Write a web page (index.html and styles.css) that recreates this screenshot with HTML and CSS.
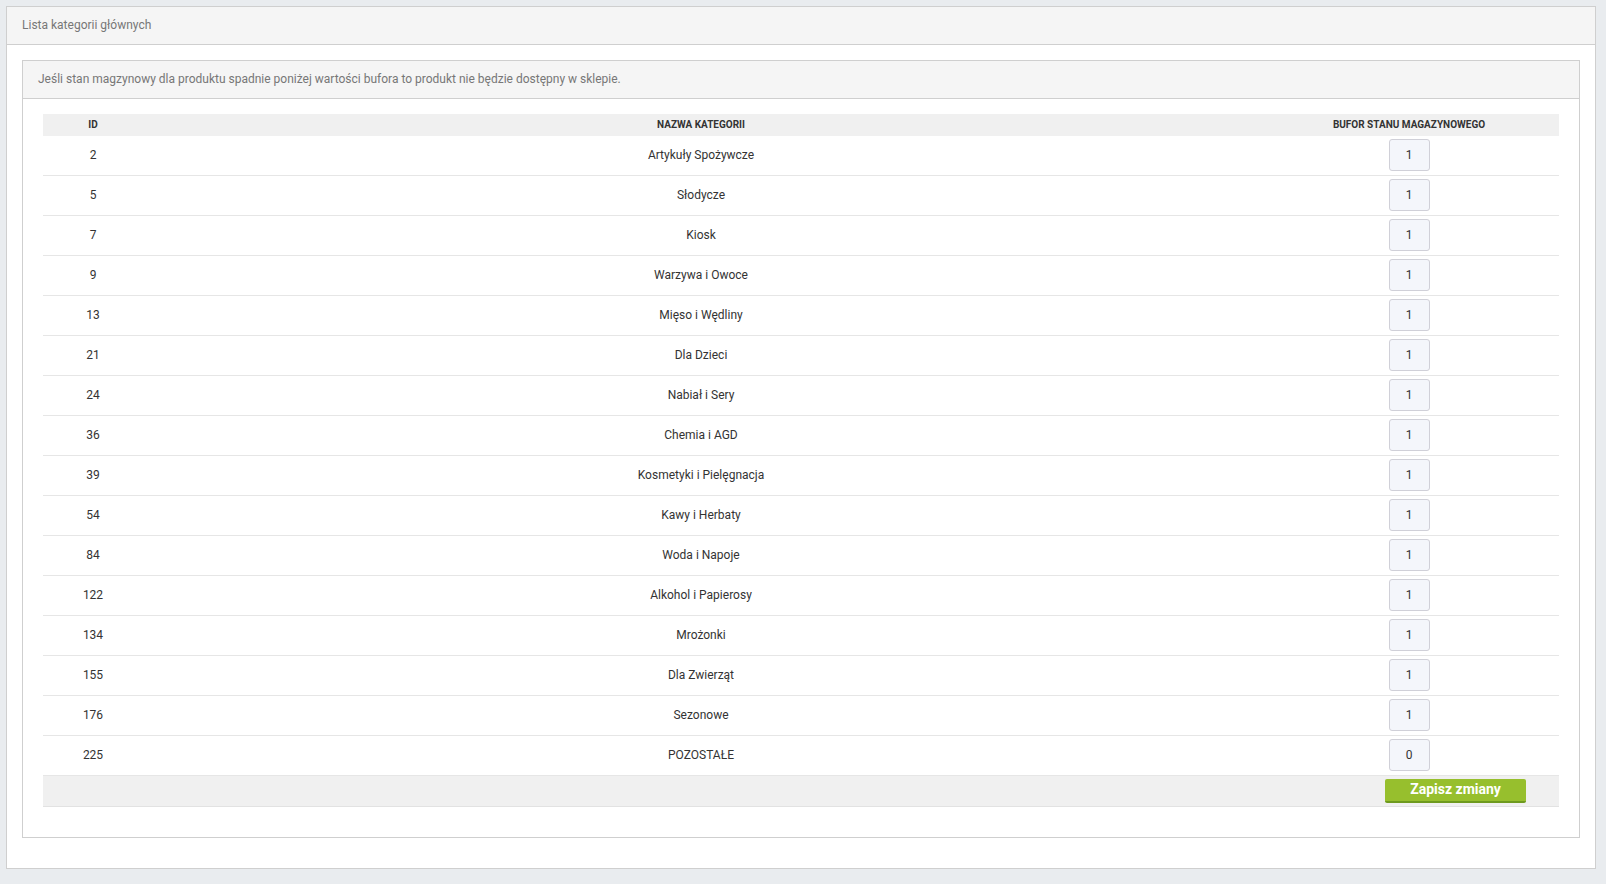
FILE: index.html
```html
<!DOCTYPE html>
<html lang="pl">

<head>
    <meta charset="UTF-8">
    <title>Lista kategorii głównych</title>
    <link rel="stylesheet" href="styles.css">
</head>

<body>

    <div class="panel">
        <div class="panel-head">Lista kategorii głównych</div>
        <div class="panel-body">
            <div class="box">
                <div class="box-head">Jeśli stan magzynowy dla produktu spadnie poniżej wartości bufora to produkt nie będzie dostępny w sklepie.</div>
                <div class="box-body">
                    <form method="post" action="#" id="bufForm">
                        <table class="list">
                            <colgroup>
                                <col class="c-id">
                                <col class="c-name">
                                <col class="c-buf">
                            </colgroup>
                            <thead>
                                <tr>
                                    <th>ID</th>
                                    <th>Nazwa kategorii</th>
                                    <th>Bufor stanu magazynowego</th>
                                </tr>
                            </thead>
                            <tbody>
                                <tr><td>2</td><td>Artykuły Spożywcze</td><td><input type="text" class="buf" value="1"></td></tr>
                                <tr><td>5</td><td>Słodycze</td><td><input type="text" class="buf" value="1"></td></tr>
                                <tr><td>7</td><td>Kiosk</td><td><input type="text" class="buf" value="1"></td></tr>
                                <tr><td>9</td><td>Warzywa i Owoce</td><td><input type="text" class="buf" value="1"></td></tr>
                                <tr><td>13</td><td>Mięso i Wędliny</td><td><input type="text" class="buf" value="1"></td></tr>
                                <tr><td>21</td><td>Dla Dzieci</td><td><input type="text" class="buf" value="1"></td></tr>
                                <tr><td>24</td><td>Nabiał i Sery</td><td><input type="text" class="buf" value="1"></td></tr>
                                <tr><td>36</td><td>Chemia i AGD</td><td><input type="text" class="buf" value="1"></td></tr>
                                <tr><td>39</td><td>Kosmetyki i Pielęgnacja</td><td><input type="text" class="buf" value="1"></td></tr>
                                <tr><td>54</td><td>Kawy i Herbaty</td><td><input type="text" class="buf" value="1"></td></tr>
                                <tr><td>84</td><td>Woda i Napoje</td><td><input type="text" class="buf" value="1"></td></tr>
                                <tr><td>122</td><td>Alkohol i Papierosy</td><td><input type="text" class="buf" value="1"></td></tr>
                                <tr><td>134</td><td>Mrożonki</td><td><input type="text" class="buf" value="1"></td></tr>
                                <tr><td>155</td><td>Dla Zwierząt</td><td><input type="text" class="buf" value="1"></td></tr>
                                <tr><td>176</td><td>Sezonowe</td><td><input type="text" class="buf" value="1"></td></tr>
                                <tr><td>225</td><td>POZOSTAŁE</td><td><input type="text" class="buf" value="0"></td></tr>
                            </tbody>
                            <tfoot>
                                <tr>
                                    <td colspan="3"><input type="submit" class="btn-save" value="Zapisz zmiany"></td>
                                </tr>
                            </tfoot>
                        </table>
                    </form>
                </div>
            </div>
        </div>
    </div>

</body>

</html>
```

FILE: styles.css
```css
html, body {
    margin: 0;
    padding: 0;
}

body {
    background: #e9ecef;
    font: 12px/16px Roboto, "Liberation Sans", Arial, sans-serif;
    color: #333;
    height: 884px;
    overflow: hidden;
}

.panel {
    margin: 6px 10px 0 6px;
    background: #fff;
    border: 1px solid #cfcfcf;
}

.panel-head {
    height: 37px;
    line-height: 37px;
    padding: 0 15px;
    background: #f5f5f5;
    border-bottom: 1px solid #cfcfcf;
    color: #777;
}

.panel-body {
    padding: 15px 15px 30px 15px;
}

.box {
    border: 1px solid #cfcfcf;
}

.box-head {
    height: 37px;
    line-height: 36px;
    padding: 0 15px;
    background: #f5f5f5;
    border-bottom: 1px solid #cfcfcf;
    color: #777;
}

.box-body {
    padding: 15px 20px 30px 20px;
}

.list {
    width: 100%;
    border-collapse: collapse;
    table-layout: fixed;
}

.c-id {
    width: 100px;
}

.c-buf {
    width: 300px;
}

.list th {
    height: 22px;
    padding: 0;
    background: #f0f0f0;
    font-size: 10px;
    font-weight: bold;
    text-transform: uppercase;
    text-align: center;
    color: #333;
}

.list tbody td {
    height: 37px;
    padding: 0 0 2px 0;
    text-align: center;
    border-bottom: 1px solid #e6e6e6;
    vertical-align: middle;
}

.list tbody tr:last-child td {
    border-bottom: 0;
}

.buf {
    box-sizing: border-box;
    width: 41px;
    height: 32px;
    margin: 0;
    padding: 0;
    border: 1px solid #d0d0d8;
    border-radius: 3px;
    background: #f4f6fb;
    font: 12px Roboto, "Liberation Sans", Arial, sans-serif;
    color: #333;
    text-align: center;
    vertical-align: middle;
}

.list tfoot td {
    height: 30px;
    padding: 0 33px 0 0;
    background: #f0f0f0;
    border-top: 1px solid #e6e6e6;
    border-bottom: 1px solid #e2e2e2;
    text-align: right;
    vertical-align: middle;
}

.btn-save {
    box-sizing: border-box;
    width: 141px;
    height: 24px;
    margin: 0;
    padding: 0 0 2px 0;
    border: 0;
    border-bottom: 2px solid #6e9a1e;
    border-radius: 2px;
    background: #97bf2d;
    font: bold 14px Roboto, "Liberation Sans", Arial, sans-serif;
    color: #fff;
    vertical-align: middle;
    cursor: pointer;
}
```
